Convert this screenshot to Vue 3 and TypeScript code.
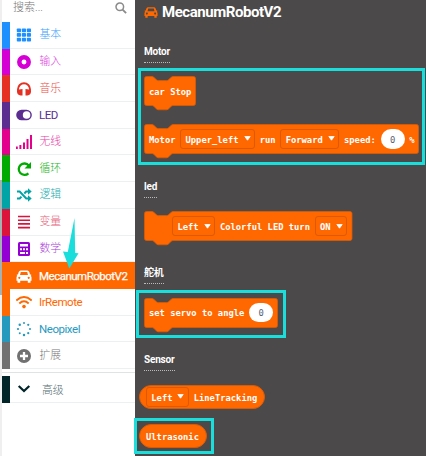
<script setup lang="ts">
interface Category { name: string; color: string; text?: string; icon: string; active?: boolean; latin?: boolean }
interface Segment { kind: 'text' | 'menu' | 'number'; value: string }
interface Block { shape: 'stack' | 'pill'; width: number; top: number; indent?: boolean; parts: Segment[] }
interface Group { title: string; top: number; blocks: Block[] }

const categories: Category[] = [
  { name: '基本', color: '#1e90ff', text: '#3d9ffc', icon: 'grid' },
  { name: '输入', color: '#d400d4', text: '#e040e0', icon: 'target' },
  { name: '音乐', color: '#e63022', text: '#ea4c40', icon: 'phones' },
  { name: 'LED', color: '#5c2d91', icon: 'toggle', latin: true },
  { name: '无线', color: '#e3008c', text: '#e93aa5', icon: 'signal' },
  { name: '循环', color: '#00aa00', text: '#1cb41c', icon: 'redo' },
  { name: '逻辑', color: '#00a4a6', text: '#1cacae', icon: 'shuffle' },
  { name: '变量', color: '#dc143c', text: '#e5627a', icon: 'lines' },
  { name: '数学', color: '#9400d3', text: '#a93cdb', icon: 'calc' },
  { name: 'MecanumRobotV2', color: '#ff6800', icon: 'car', active: true, latin: true },
  { name: 'IrRemote', color: '#ff6800', icon: 'wifi', latin: true },
  { name: 'Neopixel', color: '#2699bf', icon: 'spinner', latin: true },
  { name: '扩展', color: '#717171', text: '#777777', icon: 'plus' },
]

const t = (value: string): Segment => ({ kind: 'text', value })
const m = (value: string): Segment => ({ kind: 'menu', value })
const n = (value: string): Segment => ({ kind: 'number', value })

const groups: Group[] = [
  { title: 'Motor', top: 21, blocks: [
    { shape: 'stack', width: 52, top: 13.2, parts: [t('car Stop')] },
    { shape: 'stack', width: 275, top: 18.5, parts: [t('Motor'), m('Upper_left'), t('run'), m('Forward'), t('speed:'), n('0'), t('%')] },
  ] },
  { title: 'led', top: 26.5, blocks: [
    { shape: 'stack', width: 208.5, top: 13.2, indent: true, parts: [m('Left'), t('Colorful LED turn'), m('ON')] },
  ] },
  { title: '舵机', top: 25.5, blocks: [
    { shape: 'stack', width: 134, top: 13.2, parts: [t('set servo to angle'), n('0')] },
  ] },
  { title: 'Sensor', top: 25.5, blocks: [
    { shape: 'pill', width: 126, top: 14, parts: [m('Left'), t('LineTracking')] },
    { shape: 'pill', width: 68, top: 14.5, parts: [t('Ultrasonic')] },
  ] },
]

const outline = (w: number): string =>
  `M.5 2.5q0-2 2-2H8q1 0 2 1l2.5 2.3q1 .8 2 .8h8q1 0 2-.8L27 1.5q1-1 2-1H${w - 2.5}q2 0 2 2V27.5q0 2-2 2H29q-1 0-2 1l-2.5 2.4q-1 .9-2 .9h-8q-1 0-2-.9L10 30.5q-1-1-2-1H2.5q-2 0-2-2z`

const dots = [0, 1, 2, 3, 4, 5, 6, 7].map((i) => ({
  x: 8 + 6 * Math.cos((i * Math.PI) / 4), y: 8 + 6 * Math.sin((i * Math.PI) / 4), r: 1 + (i % 3) * 0.12,
}))
</script>

<template>
  <main class="editor">
    <div class="edge"><div class="edge-thumb"></div></div>
    <aside class="toolbox">
      <div class="search">
        <span>搜索...</span>
        <svg width="12" height="12" viewBox="0 0 12 12"><circle cx="4.800" cy="4.800" r="3.800" fill="none" stroke="#8b8b8b" stroke-width="1.500" /><path d="M7.600 7.600l3.500 3.500" stroke="#8b8b8b" stroke-width="1.800" /></svg>
      </div>
      <ul>
        <li v-for="c in categories" :key="c.name" :class="{ active: c.active }" :style="{ '--tint': c.color, '--label': c.text ?? c.color }">
          <i class="strip"></i>
          <svg class="icon" viewBox="0 0 16 16" fill="none" stroke="none">
            <g v-if="c.icon === 'grid'" fill="currentColor">
              <template v-for="y in 3" :key="y"><rect v-for="x in 3" :key="x" :x="x * 5 - 4.200" :y="y * 4.600 - 3.100" width="4.200" height="3.700" rx=".7" /></template>
            </g>
            <circle v-else-if="c.icon === 'target'" cx="8" cy="8" r="4.700" stroke="currentColor" stroke-width="4.500" />
            <g v-else-if="c.icon === 'phones'">
              <path d="M2 11V8.200a6 6 0 0 1 12 0V11" stroke="currentColor" stroke-width="1.900" />
              <path d="M6.500 8v6.500H4.600Q1 13.800 1 10.500L3 8.600zM9.500 8v6.500h1.900Q15 13.800 15 10.500L13 8.600z" fill="currentColor" />
            </g>
            <g v-else-if="c.icon === 'toggle'"><rect x=".2" y="2.700" width="15.600" height="10.600" rx="5.300" fill="currentColor" /><circle cx="10.600" cy="8" r="3.800" fill="#fff" /></g>
            <path v-else-if="c.icon === 'signal'" d="M.8 15v-2.500M4.400 15v-4M8 15V8.500M11.500 15V5M15 15V1" stroke="currentColor" stroke-width="2" />
            <g v-else-if="c.icon === 'redo'"><path d="M12.800 4.500A5.700 5.700 0 1 0 12.400 12.300" stroke="currentColor" stroke-width="2.300" /><path d="M15 1v6.500H8.500z" fill="currentColor" /></g>
            <g v-else-if="c.icon === 'shuffle'"><path d="M1 4.500h2.700l6.500 7H13M1 11.500h2.700L5.500 9.600M8.300 6.500l1.900-2H13" stroke="currentColor" stroke-width="2" /><path d="M12 1.200l3.700 3.300L12 7.800zM12 8.200l3.700 3.300-3.700 3.300z" fill="currentColor" /></g>
            <path v-else-if="c.icon === 'lines'" d="M2 2.500h12M2 6.200h12M2 9.900h12M2 13.600h12" stroke="currentColor" stroke-width="1.600" />
            <g v-else-if="c.icon === 'calc'"><rect x="2" y="1" width="12" height="14" rx="1.600" fill="currentColor" /><path d="M4 3h8v2.500H4zM4 7.200h2v2H4zM7 7.200h2v2H7zM10 7.200h2v2h-2zM4 11h5v2H4zM10 11h2v2h-2z" fill="#fff" /></g>
            <path v-else-if="c.icon === 'car'" fill-rule="evenodd" d="M4.700 2.500h6.600q1.500 0 2 1.500l.7 2.400h1.200v1l-.5.300q.8.700.8 1.700v3.300h-1v2h-2.700v-2H4.200v2H1.500v-2h-1V9.400q0-1 .8-1.700L.8 7.400v-1H2L2.700 4q.5-1.500 2-1.500zM4.800 4L4 7h8l-.8-3zM3.300 8.700a1.100 1.100 0 1 0 .01 0zM12.700 8.700a1.100 1.100 0 1 0 .01 0z" fill="currentColor" />
            <g v-else-if="c.icon === 'wifi'"><path d="M.3 6.500Q8-.5 15.700 6.500M3.300 9.500Q8 5.200 12.700 9.500" stroke="currentColor" stroke-width="1.900" /><circle cx="8" cy="12.600" r="1.800" fill="currentColor" /></g>
            <g v-else-if="c.icon === 'spinner'" fill="currentColor"><circle v-for="(d, i) in dots" :key="i" :cx="d.x" :cy="d.y" :r="d.r" /></g>
            <g v-else><circle cx="8" cy="8" r="7" fill="currentColor" /><path d="M8 4v8M4 8h8" stroke="#fff" stroke-width="2.300" /></g>
          </svg>
          <span :class="{ latin: c.latin }">{{ c.name }}</span>
        </li>
      </ul>
      <div class="advanced">
        <i class="strip"></i>
        <svg class="icon" viewBox="0 0 16 16"><path d="M2.700 5L8 10l5.300-5" fill="none" stroke="currentColor" stroke-width="2.200" /></svg>
        <span>高级</span>
      </div>
    </aside>

    <section class="flyout">
      <h1>
        <svg width="14" height="14" viewBox="0 0 16 16"><path fill-rule="evenodd" d="M4.700 2.500h6.600q1.500 0 2 1.500l.7 2.400h1.200v1l-.5.300q.8.700.8 1.700v3.300h-1v2h-2.700v-2H4.200v2H1.500v-2h-1V9.400q0-1 .8-1.700L.8 7.400v-1H2L2.700 4q.5-1.500 2-1.500zM4.800 4L4 7h8l-.8-3zM3.300 8.700a1.100 1.100 0 1 0 .01 0zM12.700 8.700a1.100 1.100 0 1 0 .01 0z" fill="#ff6800" /></svg>
        <span>MecanumRobotV2</span>
      </h1>
      <div v-for="g in groups" :key="g.title" class="group" :style="{ marginTop: g.top + 'px' }">
        <h2>{{ g.title }}</h2>
        <div v-for="(b, i) in g.blocks" :key="i" class="block" :class="[b.shape, { indent: b.indent }]" :style="{ width: b.width + 'px', marginTop: b.top + 'px' }">
          <svg v-if="b.shape === 'stack'" class="shape" :width="b.width" height="35"><path :d="outline(b.width)" fill="#ff6800" stroke="#d95a04" stroke-width=".8" /></svg>
          <span v-for="(p, j) in b.parts" :key="j" :class="p.kind"><span class="word">{{ p.value }}</span><svg v-if="p.kind === 'menu'" width="7" height="5" viewBox="0 0 7 5"><path d="M.8.500h5.400L3.500 4.200z" fill="#fff" stroke="#fff" stroke-width=".8" stroke-linejoin="round" /></svg></span>
        </div>
      </div>
    </section>

    <div class="mark motor-mark"></div>
    <div class="mark servo-mark"></div>
    <div class="mark sonic-mark"></div>
    <svg class="pointer" width="16" height="52" viewBox="0 0 16 52"><path d="M11.500 0L12.200 35l3.300.2L6.300 50.500 0 33.500l4.800.6z" fill="#19dedb" /></svg>
  </main>
</template>

<style>
body { margin: 0; overflow: hidden; }
</style>

<style scoped>
* { box-sizing: border-box; }
.editor { position: relative; display: flex; width: 426px; height: 456px; overflow: hidden; background: #fff; font-family: Roboto, "Noto Sans CJK SC", sans-serif; }
.edge { width: 2px; flex: none; background: #efefef; padding-top: 180px; }
.edge-thumb { height: 115px; background: #a5b0b0; }
.toolbox { width: 133px; flex: none; background: #fff; }
.search { height: 22px; display: flex; justify-content: space-between; padding: 0 8px 0 11px; color: #777; font-size: 11px; line-height: 15px; font-weight: 300; }
.search svg { margin-top: 2px; }
ul { list-style: none; margin: 0; padding: 0; }
li, .advanced { display: flex; align-items: center; height: 26.69px; background: linear-gradient(#ecf0f1, #ecf0f1) 0 100% / 100% 1px no-repeat; color: var(--tint); font-size: 10.800px; font-weight: 300; }
.strip { align-self: stretch; width: 8px; flex: none; margin-right: 5px; background: var(--tint); }
li > span { color: var(--label); margin-left: 7.500px; white-space: nowrap; line-height: 16px; }
li > .latin { margin-left: 7px; font-size: 11.500px; font-weight: 400; letter-spacing: -0.450px; }
li.active { background: #ff6800; color: #fff; }
li.active > span { color: #fff; letter-spacing: -0.500px; -webkit-text-stroke: 0.250px #fff; }
.icon { width: 16px; height: 16px; flex: none; margin-left: 1px; }
.advanced { --tint: #002428; margin-top: 7px; position: relative; }
.advanced::before { content: ""; position: absolute; left: 0; right: 0; top: -4px; height: 1px; background: #dfe3e3; }
.advanced span { margin-left: 10px; color: #557074; }
.flyout { flex: 1; background: #4b4949; padding-left: 9px; }
h1 { margin: 0; height: 24px; display: flex; align-items: center; font-size: 15px; font-weight: 700; color: #fff; gap: 4px; }
h1 span { letter-spacing: -0.450px; }
h2 { margin: 0; width: max-content; height: 18px; line-height: 13px; font-size: 10px; font-weight: 700; letter-spacing: -0.180px; color: #fff; border-bottom: 1px dotted #bbb; }
.block { position: relative; display: flex; align-items: center; gap: 4.750px; height: 29.500px; padding-left: 5px; color: #fff; font: 700 8.800px/12px "DejaVu Sans Mono", "Liberation Mono", monospace; white-space: pre; }
.indent { padding-left: 28.200px; }
.shape { position: absolute; left: 0; top: 0; }
.block > span { position: relative; flex: none; }
.word { display: block; margin-top: 1px; margin-bottom: -1px; }
.pill { height: 24.500px; margin-left: -5px; padding-left: 6px; border-radius: 13px; background: #ff6800; border: 1px solid #d95a04; }
.menu { display: flex; align-items: center; gap: 5px; height: 20.500px; padding: 0 3.500px 0 4.300px; border: 1px solid #dc5a00; border-radius: 3px; }
.number { display: flex; align-items: center; justify-content: center; width: 24px; height: 19.500px; border-radius: 10px; background: #fff; color: #575e75; font-weight: 400; }
.mark { position: absolute; border: 3px solid #19dedb; }
.motor-mark { left: 138px; top: 68px; width: 287px; height: 97px; }
.servo-mark { left: 136px; top: 290px; width: 150px; height: 48px; }
.sonic-mark { left: 134px; top: 418px; width: 80px; height: 36px; }
.pointer { position: absolute; left: 63px; top: 218px; }
</style>
